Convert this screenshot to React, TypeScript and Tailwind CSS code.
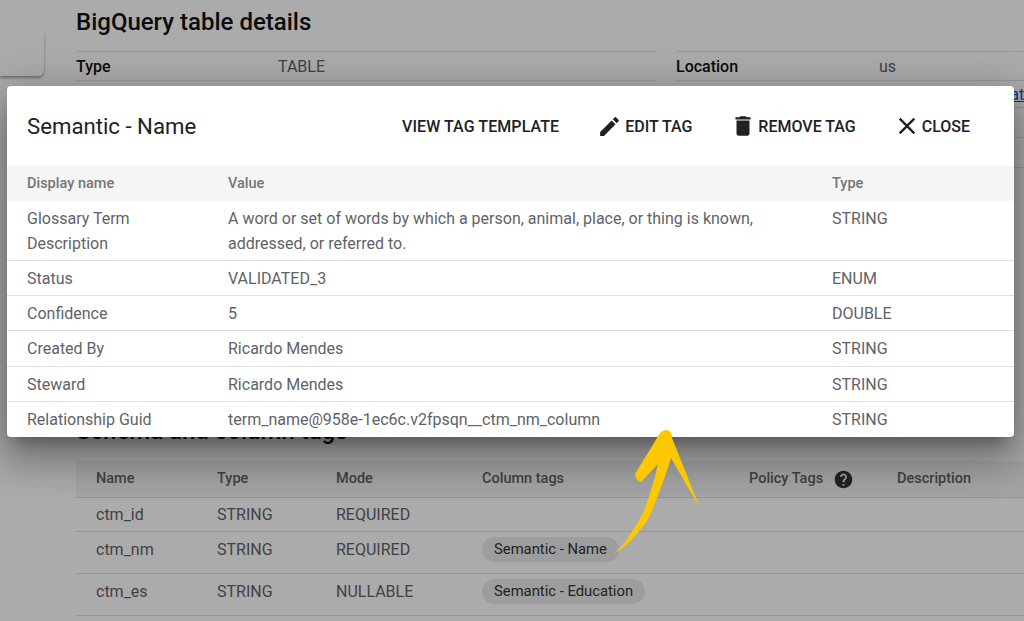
const iconPaths = {
  edit: "M3 17.25V21h3.75L17.81 9.94l-3.75-3.75L3 17.25zM20.71 7.04c.39-.39.39-1.02 0-1.41l-2.34-2.34c-.39-.39-1.02-.39-1.41 0l-1.83 1.83 3.75 3.75 1.83-1.83z",
  trash: "M6 19c0 1.1.9 2 2 2h8c1.1 0 2-.9 2-2V7H6v12zM19 4h-3.5l-1-1h-5l-1 1H5v2h14V4z",
  close: "M19 6.41L17.59 5 12 10.59 6.41 5 5 6.41 10.59 12 5 17.59 6.41 19 12 13.41 17.59 19 19 17.59 13.41 12z",
  help: "M12 2C6.48 2 2 6.48 2 12s4.48 10 10 10 10-4.48 10-10S17.52 2 12 2zm1 17h-2v-2h2v2zm2.07-7.75l-.9.92C13.45 12.9 13 13.5 13 15h-2v-.5c0-1.1.45-2.1 1.17-2.83l1.24-1.26c.37-.36.59-.86.59-1.41 0-1.1-.9-2-2-2s-2 .9-2 2H8c0-2.21 1.79-4 4-4s4 1.79 4 4c0 .88-.36 1.68-.93 2.25z",
};

function Icon({ d, size = 26 }: { d: string; size?: number }) {
  return (
    <svg width={size} height={size} viewBox="0 0 24 24" fill="currentColor" className="shrink-0">
      <path d={d} />
    </svg>
  );
}

const tagRows = [
  { name: "Glossary Term Description", value: "A word or set of words by which a person, animal, place, or thing is known, addressed, or referred to.", type: "STRING", height: "h-[59px]" },
  { name: "Status", value: "VALIDATED_3", type: "ENUM", height: "h-[35px]" },
  { name: "Confidence", value: "5", type: "DOUBLE", height: "h-[35px]" },
  { name: "Created By", value: "Ricardo Mendes", type: "STRING", height: "h-[36px]" },
  { name: "Steward", value: "Ricardo Mendes", type: "STRING", height: "h-[35px]" },
  { name: "Relationship Guid", value: "term_name@958e-1ec6c.v2fpsqn__ctm_nm_column", type: "STRING", height: "h-[36px]" },
];

const columns = [
  { name: "ctm_id", type: "STRING", mode: "REQUIRED", tag: "", height: "h-[34px]" },
  { name: "ctm_nm", type: "STRING", mode: "REQUIRED", tag: "Semantic - Name", height: "h-[42px] pb-[6px]" },
  { name: "ctm_es", type: "STRING", mode: "NULLABLE", tag: "Semantic - Education", height: "h-[42px] pb-[6px]" },
];

export default function App() {
  return (
    <div className="relative w-[1024px] h-[621px] overflow-hidden bg-white font-[Roboto,sans-serif]">
      {/* Page behind the dialog */}
      <div className="flex">
        <div className="w-[44px] shrink-0 pt-[32px]">
          <div className="h-[44px] bg-white rounded-br-md shadow-[0_2px_3px_rgba(0,0,0,0.35)]" />
        </div>
        <main className="ml-[32px] flex-1 min-w-0">
          <h1 className="h-[51px] pt-[6px] text-[24px] leading-[32px] font-medium text-[#111]">BigQuery table details</h1>
          <div className="flex gap-[20px]">
            <div className="w-[580px] h-[30px] pt-[2px] border-y border-[#e0e0e0] flex items-center text-[16px]">
              <span className="w-[202px] font-medium text-[#111]">Type</span>
              <span className="text-[#5f6368]">TABLE</span>
            </div>
            <div className="flex-1 h-[30px] pt-[2px] border-y border-[#e0e0e0] flex items-center text-[16px]">
              <span className="w-[203px] font-medium text-[#111]">Location</span>
              <span className="text-[#5f6368]">us</span>
            </div>
          </div>
          <div className="h-[27px] border-b border-[#e0e0e0] flex justify-end items-end -mr-[9px] text-[16px] text-[#1a56c4] underline">Data</div>
          <div className="h-[30px] border-b border-[#e0e0e0]" />
          <div className="h-[30px] border-b border-[#e0e0e0]" />
          <div className="h-[293px] flex flex-col justify-end">
            <h2 className="text-[24px] leading-[32px] mb-[14px] font-medium text-[#111]">Schema and column tags</h2>
          </div>
          <div className="h-[37px] bg-[#f5f5f5] flex items-center border-b border-[#e0e0e0] text-[14.5px] font-medium text-[#5f6368]">
            <span className="ml-[20px] w-[121px]">Name</span>
            <span className="w-[119px]">Type</span>
            <span className="w-[146px]">Mode</span>
            <span className="w-[267px]">Column tags</span>
            <span className="flex items-center w-[148px] gap-[10px]">
              Policy Tags
              <span className="text-[#333]"><Icon d={iconPaths.help} size={21} /></span>
            </span>
            <span>Description</span>
          </div>
          {columns.map((col) => (
            <div key={col.name} className={`${col.height} flex items-center border-b border-[#e0e0e0] text-[16px] text-[#5f6368]`}>
              <span className="ml-[20px] w-[121px]">{col.name}</span>
              <span className="w-[119px]">{col.type}</span>
              <span className="w-[146px]">{col.mode}</span>
              {col.tag && (
                <span className="h-[25px] px-[12px] flex items-center rounded-full bg-[#ebebeb] text-[14.8px] text-[#333]">{col.tag}</span>
              )}
            </div>
          ))}
        </main>
      </div>

      {/* Backdrop */}
      <div className="absolute inset-0 bg-black/[0.33]" />

      {/* Dialog */}
      <div className="absolute left-[7px] top-[86px] w-[1007px] h-[351px] bg-white rounded-[4px] overflow-hidden text-[16px] text-[#5f6368] shadow-[0_11px_15px_-7px_rgba(0,0,0,0.3),0_24px_38px_3px_rgba(0,0,0,0.2),0_9px_46px_8px_rgba(0,0,0,0.18)]">
        <div className="h-[80px] flex items-center text-[16px] font-medium text-[#202124]">
          <span className="ml-[20px] w-[375px] pt-[1px] text-[22.2px] font-normal">Semantic - Name</span>
          <span className="pt-[1px] tracking-[0.005em]">VIEW TAG TEMPLATE</span>
          <span className="ml-[38px] flex items-center gap-[3px]">
            <Icon d={iconPaths.edit} size={25} />
            <span className="pt-[1px]">EDIT TAG</span>
          </span>
          <span className="ml-[38px] flex items-center gap-[2px]">
            <Icon d={iconPaths.trash} />
            <span className="pt-[1px]">REMOVE TAG</span>
          </span>
          <span className="ml-[37px] flex items-center gap-[1px]">
            <Icon d={iconPaths.close} size={28} />
            <span className="pt-[1px]">CLOSE</span>
          </span>
        </div>
        <div className="h-[35px] flex items-center bg-[#f5f5f5] text-[14.5px] font-medium text-[#757575]">
          <span className="ml-[20px] w-[201px]">Display name</span>
          <span className="w-[604px]">Value</span>
          <span>Type</span>
        </div>
        {tagRows.map((row, i) => (
          <div key={row.name} className={`${row.height} flex items-start pt-[5px] leading-[25px] ${i > 0 ? "border-t border-[#e0e0e0]" : ""}`}>
            <span className="ml-[20px] w-[201px] pr-[60px]">{row.name}</span>
            <span className="w-[604px] pr-[50px]">{row.value}</span>
            <span>{row.type}</span>
          </div>
        ))}
      </div>

      {/* Hand drawn arrow */}
      <svg className="absolute left-0 top-0" width="1024" height="621" viewBox="0 0 1024 621" fill="#fdc800">
        <path d="M613 553 C622 548 628 538 633 530 C640 520 644 512 647 503 C651 490 655 478 658 464 L641 482 Q636 481 635 474 L657 438 Q661 429 667 430 Q672 431 672 438 L700 508 L671 458 C666 475 660 490 655 503 C651 515 645 525 640 530 C632 540 622 551 613 553 Z" />
      </svg>
    </div>
  );
}
